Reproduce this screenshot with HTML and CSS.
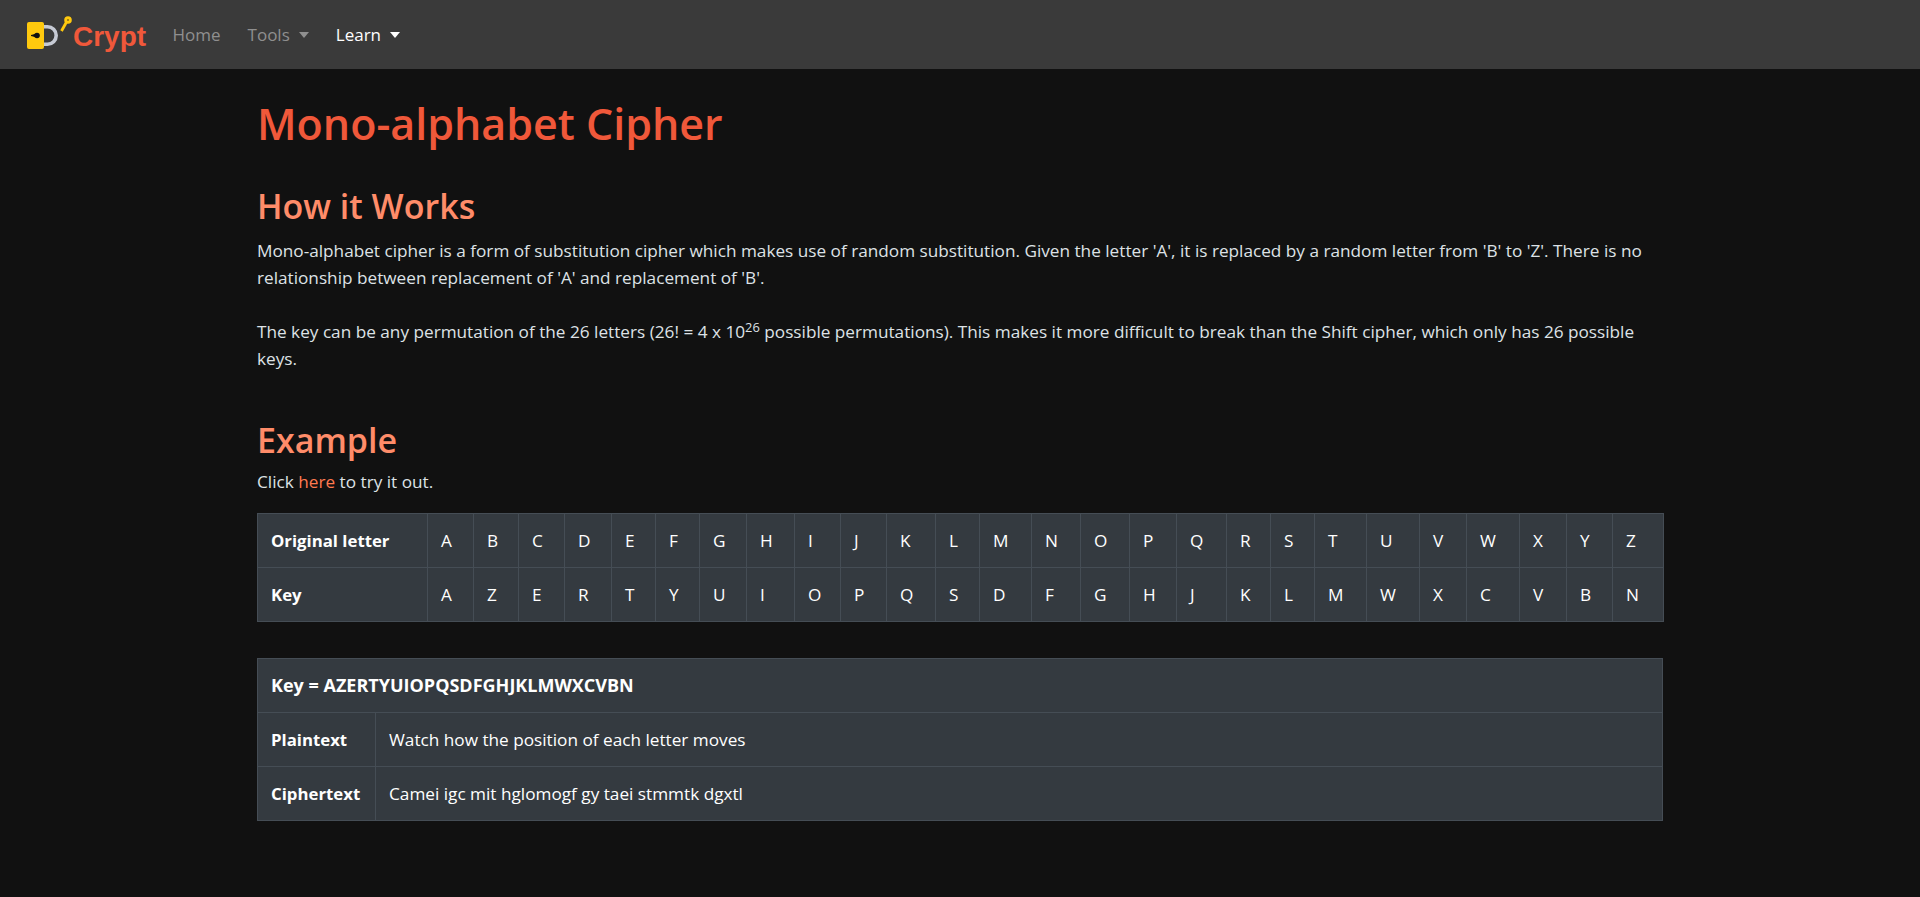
FILE: index.html
```html
<!DOCTYPE html>
<html lang="en">
<head>
<meta charset="utf-8">
<title>Mono-alphabet Cipher</title>
<link rel="stylesheet" href="styles.css">
</head>
<body>
<nav class="navbar">
  <a class="brand" href="#">
    <svg class="logo" width="46" height="45" viewBox="0 0 46 45">
      <path d="M18 14.800h3.500a8.700 8.700 0 0 1 0 17.400h-3.500" fill="none" stroke="#c6cad4" stroke-width="3.600"/>
      <rect x="1" y="10" width="17" height="27" rx="2" fill="#ffc90e"/>
      <circle cx="11" cy="23.500" r="2.800" fill="#111"/>
      <path d="M5 23.500 9 22.500v2z" fill="#111" stroke="#111" stroke-width="1"/>
      <circle cx="42" cy="8" r="2.400" fill="#8a6d10" stroke="#ffc90e" stroke-width="2.800"/>
      <path d="M40.500 10 35.500 19" stroke="#ffc90e" stroke-width="2.800" fill="none"/>
    </svg>
    <span class="brand-text">Crypt</span>
  </a>
  <ul class="nav">
    <li><a class="nav-link" href="#">Home</a></li>
    <li><a class="nav-link caret" href="#">Tools</a></li>
    <li><a class="nav-link caret active" href="#">Learn</a></li>
  </ul>
</nav>
<main class="container">
  <h1>Mono-alphabet Cipher</h1>
  <h2>How it Works</h2>
  <p class="para">Mono-alphabet cipher is a form of substitution cipher which makes use of random substitution. Given the letter 'A', it is replaced by a random letter from 'B' to 'Z'. There is no relationship between replacement of 'A' and replacement of 'B'.</p>
  <p>The key can be any permutation of the 26 letters (26! = 4 x 10<sup>26</sup> possible permutations). This makes it more difficult to break than the Shift cipher, which only has 26 possible keys.</p>
  <h2 class="example">Example</h2>
  <p class="intro">Click <a href="#">here</a> to try it out.</p>
  <table class="grid letters">
    <colgroup><col><col><col><col><col><col><col><col><col><col><col><col><col><col><col><col><col><col><col><col><col><col><col><col><col><col><col></colgroup>
    <tr><th>Original letter</th><td>A</td><td>B</td><td>C</td><td>D</td><td>E</td><td>F</td><td>G</td><td>H</td><td>I</td><td>J</td><td>K</td><td>L</td><td>M</td><td>N</td><td>O</td><td>P</td><td>Q</td><td>R</td><td>S</td><td>T</td><td>U</td><td>V</td><td>W</td><td>X</td><td>Y</td><td>Z</td></tr>
    <tr><th>Key</th><td>A</td><td>Z</td><td>E</td><td>R</td><td>T</td><td>Y</td><td>U</td><td>I</td><td>O</td><td>P</td><td>Q</td><td>S</td><td>D</td><td>F</td><td>G</td><td>H</td><td>J</td><td>K</td><td>L</td><td>M</td><td>W</td><td>X</td><td>C</td><td>V</td><td>B</td><td>N</td></tr>
  </table>
  <table class="grid example-table">
    <colgroup><col class="label-col"><col></colgroup>
    <tr><th class="key-row" colspan="2">Key = AZERTYUIOPQSDFGHJKLMWXCVBN</th></tr>
    <tr><th>Plaintext</th><td>Watch how the position of each letter moves</td></tr>
    <tr><th>Ciphertext</th><td>Camei igc mit hglomogf gy taei stmmtk dgxtl</td></tr>
  </table>
</main>
</body>
</html>
```
FILE: styles.css
```css
* { box-sizing: border-box; }
html, body { margin: 0; }
body {
  background: #111111;
  color: #dee2e6;
  font-family: "Open Sans", "Noto Sans", sans-serif;
  font-size: 17.2px;
  line-height: 27px;
  min-height: 897px;
}
a { text-decoration: none; }
.navbar {
  height: 69px;
  background: #3a3a3a;
  display: flex;
  align-items: center;
  padding: 0 0 0 26px;
}
.brand { display: flex; align-items: center; width: 133px; }
.logo { display: block; margin-right: 1px; }
.brand-text {
  font-family: "Liberation Sans", Arial, sans-serif;
  font-weight: 700;
  font-size: 28px;
  color: #f0583a;
  line-height: 36px;
  position: relative;
  top: 2px;
}
.nav { display: flex; list-style: none; margin: 0; padding: 0; }
.nav-link { color: #8f8f8f; padding: 8px 13.500px; display: block; font-size: 17px; }
.nav-link.active { color: #fff; }
.caret::after {
  content: "";
  display: inline-block;
  margin-left: 9px;
  vertical-align: 3px;
  border-top: 6px solid currentColor;
  border-left: 5.500px solid transparent;
  border-right: 5.500px solid transparent;
}
.container { width: 1406px; margin: 0 auto; }
h1 {
  color: #f0583a;
  font-size: 43px;
  font-weight: 600;
  line-height: 55px;
  margin: 0;
  padding-top: 27px;
}
h2 {
  color: #ff8c69;
  font-size: 34px;
  font-weight: 600;
  line-height: 41px;
  margin: 35px 0 10px;
}
h2.example { margin: 48px 0 7px; }
p { margin: 0; }
.para { margin-bottom: 27px; }
sup { font-size: 75%; line-height: 0; position: relative; top: -.5em; vertical-align: baseline; }
.intro a { color: #ff7a50; }
.grid {
  width: 100%;
  table-layout: fixed;
  border-collapse: collapse;
  background: #343a40;
  color: #fff;
  border: 1px solid #454d55;
}
.grid th, .grid td {
  border: 1px solid #454d55;
  padding: 13px;
  text-align: left;
  font-weight: 400;
  height: 54px;
  white-space: nowrap;
}
.grid th { font-weight: 700; font-size: 16.800px; }
.grid .key-row { font-size: 18px; }
.label-col { width: 118px; }
.letters { margin-top: 18px; }
.example-table { margin-top: 36px; }
.letters col:nth-child(1) { width: 170px; }
.letters col:nth-child(2) { width: 46px; }
.letters col:nth-child(3) { width: 45px; }
.letters col:nth-child(4) { width: 46px; }
.letters col:nth-child(5) { width: 47px; }
.letters col:nth-child(6) { width: 44px; }
.letters col:nth-child(7) { width: 44px; }
.letters col:nth-child(8) { width: 47px; }
.letters col:nth-child(9) { width: 48px; }
.letters col:nth-child(10) { width: 46px; }
.letters col:nth-child(11) { width: 46px; }
.letters col:nth-child(12) { width: 49px; }
.letters col:nth-child(13) { width: 44px; }
.letters col:nth-child(14) { width: 52px; }
.letters col:nth-child(15) { width: 49px; }
.letters col:nth-child(16) { width: 49px; }
.letters col:nth-child(17) { width: 47px; }
.letters col:nth-child(18) { width: 50px; }
.letters col:nth-child(19) { width: 44px; }
.letters col:nth-child(20) { width: 44px; }
.letters col:nth-child(21) { width: 52px; }
.letters col:nth-child(22) { width: 53px; }
.letters col:nth-child(23) { width: 47px; }
.letters col:nth-child(24) { width: 53px; }
.letters col:nth-child(25) { width: 47px; }
.letters col:nth-child(26) { width: 46px; }
.letters col:nth-child(27) { width: 51px; }
```
